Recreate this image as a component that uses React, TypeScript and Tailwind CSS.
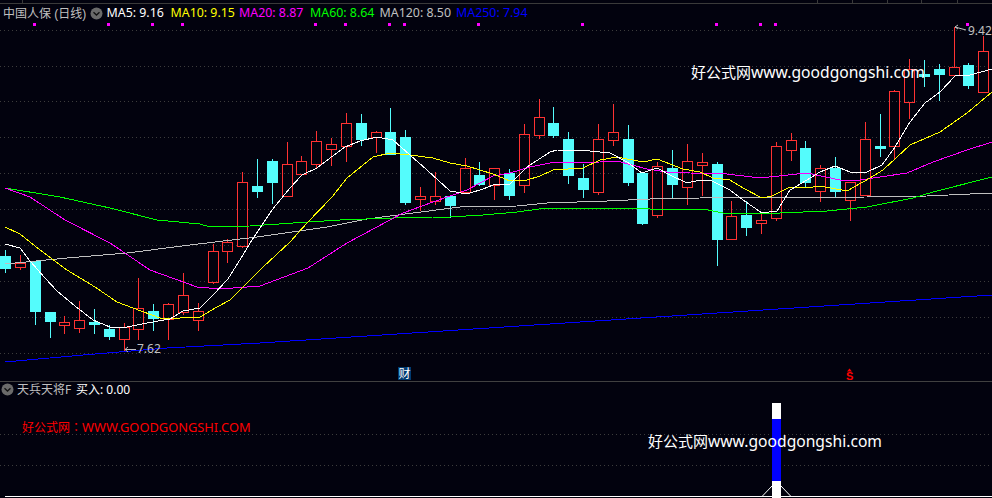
import React from "react";

type C = [number, number, number, number, number, 0 | 1];
// center x, high, body top, body bottom, low, 1=red 0=cyan
const candles: C[] = [
  [5,250,256,268,273,0],[20,255,263,267,270,1],[35,261,261,311,325,0],[50,313,312,321,338,0],
  [64,316,322,325,334,1],[79,301,320,328,333,1],[94,309,322,324,334,0],[109,325,329,336,340,0],
  [124,323,327,339,352,1],[138,278,308,329,340,1],[153,304,311,318,331,0],[168,303,304,319,340,1],
  [183,273,295,312,315,1],[198,303,311,320,331,1],[213,244,251,282,284,1],[227,239,242,251,263,1],
  [242,172,182,246,248,1],[257,159,186,191,198,0],[272,159,161,182,204,0],[287,142,164,196,196,1],
  [301,156,161,174,174,1],[316,131,141,164,169,1],[331,138,144,149,166,1],[346,113,123,146,162,1],
  [361,114,123,139,146,0],[376,131,132,137,153,1],[390,108,132,154,154,0],[405,130,137,202,205,0],
  [420,187,196,199,211,1],[435,172,196,201,205,1],[450,196,196,205,218,0],[465,158,168,192,194,1],
  [479,162,175,184,186,0],[494,168,168,185,200,1],[509,169,173,195,200,0],[524,124,134,185,193,1],
  [539,99,117,135,139,1],[553,107,123,135,138,0],[568,132,139,175,184,0],[583,164,178,189,198,0],
  [598,124,139,192,195,1],[613,104,132,140,146,1],[628,125,139,182,186,0],[642,173,173,223,225,0],
  [657,162,166,215,218,1],[672,150,168,184,198,0],[687,144,161,187,205,1],[702,153,162,165,196,1],
  [717,162,164,239,266,0],[731,201,216,239,239,1],[746,201,215,227,236,0],[761,214,220,223,234,1],
  [776,142,146,218,221,1],[791,133,140,150,161,1],[805,141,148,182,187,0],[820,165,168,191,202,1],
  [835,157,168,191,197,0],[850,182,182,200,221,1],[865,122,139,195,195,1],[880,114,146,148,157,0],
  [894,90,91,146,159,1],[909,59,69,102,119,1],[924,60,74,76,87,0],[939,64,69,74,101,0],
  [954,27,67,75,75,1],[968,63,65,85,89,0],[983,36,51,92,92,1],
];

const ma5 = "5,244 20,248 30,261 45,278 57,291 75,306 93,320 110,327 127,327 147,323 170,319 183,311 200,308 213,295 228,279 243,255 250,243 272,210 290,188 302,175 317,168 330,158 345,147 360,141 377,137 393,140 410,155 427,170 450,191 467,194 483,189 493,185 510,184 527,167 550,152 557,150 590,151 610,153 627,162 642,173 657,168 670,175 687,183 700,180 710,180 730,190 743,200 762,213 777,211 790,190 807,180 820,172 835,166 850,172 867,172 882,165 895,147 910,122 925,103 940,92 955,76 970,75 992,69";
const ma10 = "5,227 20,234 40,250 67,270 95,287 117,302 133,308 160,318 180,318 200,317 217,307 230,300 247,283 262,268 290,242 307,223 332,197 347,178 373,157 390,153 410,155 433,158 450,163 467,166 493,174 510,181 527,180 540,176 553,170 583,168 600,160 617,157 643,162 657,159 683,169 700,172 713,178 730,180 743,188 762,198 772,196 790,187 807,188 820,186 847,191 870,178 883,170 910,145 940,132 967,113 992,92";
const ma20 = "5,188 30,197 65,220 110,243 150,270 197,287 220,289 260,286 308,268 347,243 403,213 433,202 450,196 467,190 493,176 510,173 530,167 550,163 600,162 617,161 647,169 667,172 690,173 727,174 760,178 807,173 840,180 860,180 907,173 933,162 967,150 992,142";
const ma60 = "5,188 60,197 110,208 157,220 200,224 210,227 250,226 293,223 340,220 393,218 433,217 450,217 483,215 517,212 547,208 590,208 637,208 663,210 680,209 703,209 723,213 780,213 827,211 867,207 913,198 933,192 992,177";
const ma120 = "5,264 67,258 127,253 190,245 257,237 327,227 367,219 413,213 460,207 517,206 547,203 607,201 650,199 700,198 867,197 927,196 992,193";
const ma250 = "5,362 83,355 167,348 260,343 992,295";

const upperGrid = [30, 66, 101, 137, 173, 209, 245, 281, 317, 353];
const markers = [34, 108, 152, 182, 315, 345, 389, 404, 478, 582, 716, 760, 775, 967];
const ticks = [22, 817, 852, 887, 921, 957];

const legend = [
  { t: "MA5: 9.16", c: "text-[#ffffff]", w: "w-[64px]" },
  { t: "MA10: 9.15", c: "text-[#ffff00]", w: "w-[68.5px]" },
  { t: "MA20: 8.87", c: "text-[#ff00ff]", w: "w-[71px]" },
  { t: "MA60: 8.64", c: "text-[#00ff00]", w: "w-[69.5px]" },
  { t: "MA120: 8.50", c: "text-[#c0c0c0]", w: "w-[76.5px]" },
  { t: "MA250: 7.94", c: "text-[#0000ff]", w: "w-[80px]" },
];

const Collapse = () => (
  <svg width="13" height="13" viewBox="0 0 13 13" className="shrink-0">
    <circle cx="6.5" cy="6.5" r="6" fill="#6a6a6a" />
    <path d="M3.5 5.2 L6.5 8 L9.5 5.2" fill="none" stroke="#111" strokeWidth="1.3" />
  </svg>
);

const Watermark = ({ className }: { className: string }) => (
  <span className={`absolute text-white whitespace-nowrap ${className}`}>
    <span className="text-[15px]">好公式网</span>
    <span className="text-[15.65px]">www.goodgongshi.com</span>
  </span>
);

export default function App() {
  return (
    <div className="flex flex-col w-[992px] h-[498px] overflow-hidden bg-[#02020e] font-['Noto_Sans','Noto_Sans_CJK_SC',sans-serif] text-[12px] leading-none">
      {/* upper K-line panel */}
      <div className="relative w-full h-[382px] shrink-0 border-b border-[#404040]">
        <svg width="992" height="381" viewBox="0 0 992 381" className="block">
          <g shapeRendering="crispEdges">
            <line x1="0" x2="992" y1="3.5" y2="3.5" stroke="#3a3a3a" />
            {ticks.map((x) => (
              <line key={x} x1={x + 0.5} x2={x + 0.5} y1="0" y2="3" stroke="#3a3a3a" />
            ))}
            {upperGrid.map((y) => (
              <line key={y} x1="0" x2="992" y1={y + 0.5} y2={y + 0.5} stroke="#3c3c3c" strokeDasharray="1 3" />
            ))}
            {markers.map((x) => (
              <rect key={x} x={x - 1} y="23" width="3" height="3" fill="#ff00ff" />
            ))}
            {candles.map(([c, h, t, b, l, red], i) =>
              red ? (
                <g key={i} stroke="#ff3232" fill="none">
                  {h < t && <line x1={c + 0.5} x2={c + 0.5} y1={h} y2={t} />}
                  {l > b && <line x1={c + 0.5} x2={c + 0.5} y1={b} y2={l} />}
                  <rect x={c - 4.5} y={t + 0.5} width="10" height={b - t} />
                </g>
              ) : (
                <g key={i}>
                  <line x1={c + 0.5} x2={c + 0.5} y1={h} y2={l} stroke="#54fcfc" />
                  <rect x={c - 5} y={t} width="11" height={b - t + 1} fill="#54fcfc" />
                </g>
              ),
            )}
            <polyline points={ma250} fill="none" stroke="#0000ff" />
            <polyline points={ma120} fill="none" stroke="#c0c0c0" />
            <polyline points={ma60} fill="none" stroke="#00ff00" />
            <polyline points={ma20} fill="none" stroke="#ff00ff" />
            <polyline points={ma10} fill="none" stroke="#ffff00" />
            <polyline points={ma5} fill="none" stroke="#ffffff" />
          </g>
          <g stroke="#c0c0c0" fill="none" strokeWidth="1">
            <path d="M125 349.5 H136 M125 349.5 L128 347 M125 349.5 L128 352" />
            <path d="M955 27 L966 30 M955 27 L958 25 M955 27 L958 29" />
          </g>
          <path d="M849.5 368.5 L852 371.5 H847 Z" fill="#ff0000" />
        </svg>

        <div className="absolute left-[3px] top-[6px] flex items-center h-[15px]">
          <span className="w-[87px] text-[#c0c0c0] text-[12px] whitespace-nowrap font-['Liberation_Sans','Noto_Sans_CJK_SC',sans-serif]">中国人保 (日线)</span>
          <span className="w-[16.5px] flex"><Collapse /></span>
          {legend.map((l) => (
            <span key={l.t} className={`${l.c} ${l.w} text-[12.4px] whitespace-nowrap`}>{l.t}</span>
          ))}
        </div>

        <span className="absolute left-[137px] top-[343px] text-[#c0c0c0]">7.62</span>
        <span className="absolute left-[968px] top-[25px] text-[#c0c0c0]">9.42</span>
        <Watermark className="left-[691px] top-[65px]" />

        <span className="absolute left-[398px] top-[367px] w-[13px] h-[13px] flex items-center justify-center bg-[#003a70] text-white text-[12px]">财</span>
        <span className="absolute left-[846px] top-[371px] font-bold text-[#ff0000] text-[11px] font-['Liberation_Sans',sans-serif]">S</span>
      </div>

      {/* lower indicator panel */}
      <div className="relative flex-1 w-full">
        <svg width="992" height="116" viewBox="0 0 992 116" className="block">
          <g shapeRendering="crispEdges">
            <line x1="0" x2="992" y1="52.5" y2="52.5" stroke="#3c3c3c" strokeDasharray="1 3" />
            <line x1="0" x2="992" y1="83.5" y2="83.5" stroke="#3c3c3c" strokeDasharray="1 3" />
            <line x1="5" x2="992" y1="114.5" y2="114.5" stroke="#ffffff" />
            <rect x="772" y="21" width="9" height="95" fill="#ffffff" />
            <rect x="772" y="37" width="9" height="62" fill="#0000ff" />
          </g>
          <path d="M762 114.5 L772 104 M781 104 L791 114.5" stroke="#ffffff" fill="none" />
        </svg>
        <div className="absolute left-[1px] top-[0px] flex items-center h-[15px]">
          <span className="mr-[3px] flex"><Collapse /></span>
          <span className="text-[#c0c0c0] w-[59px] whitespace-nowrap">天兵天将F</span>
          <span className="text-white whitespace-nowrap">买入: 0.00</span>
        </div>
        <span className="absolute left-[22px] top-[39px] text-[#ff0000] whitespace-nowrap">
          <span className="text-[12px]">好公式网</span>
          <span className="text-[12px] font-['Noto_Sans_CJK_TC',sans-serif]">：</span>
          <span className="text-[12.85px]">WWW.GOODGONGSHI.COM</span>
        </span>
        <Watermark className="left-[648px] top-[52px]" />
      </div>
    </div>
  );
}
